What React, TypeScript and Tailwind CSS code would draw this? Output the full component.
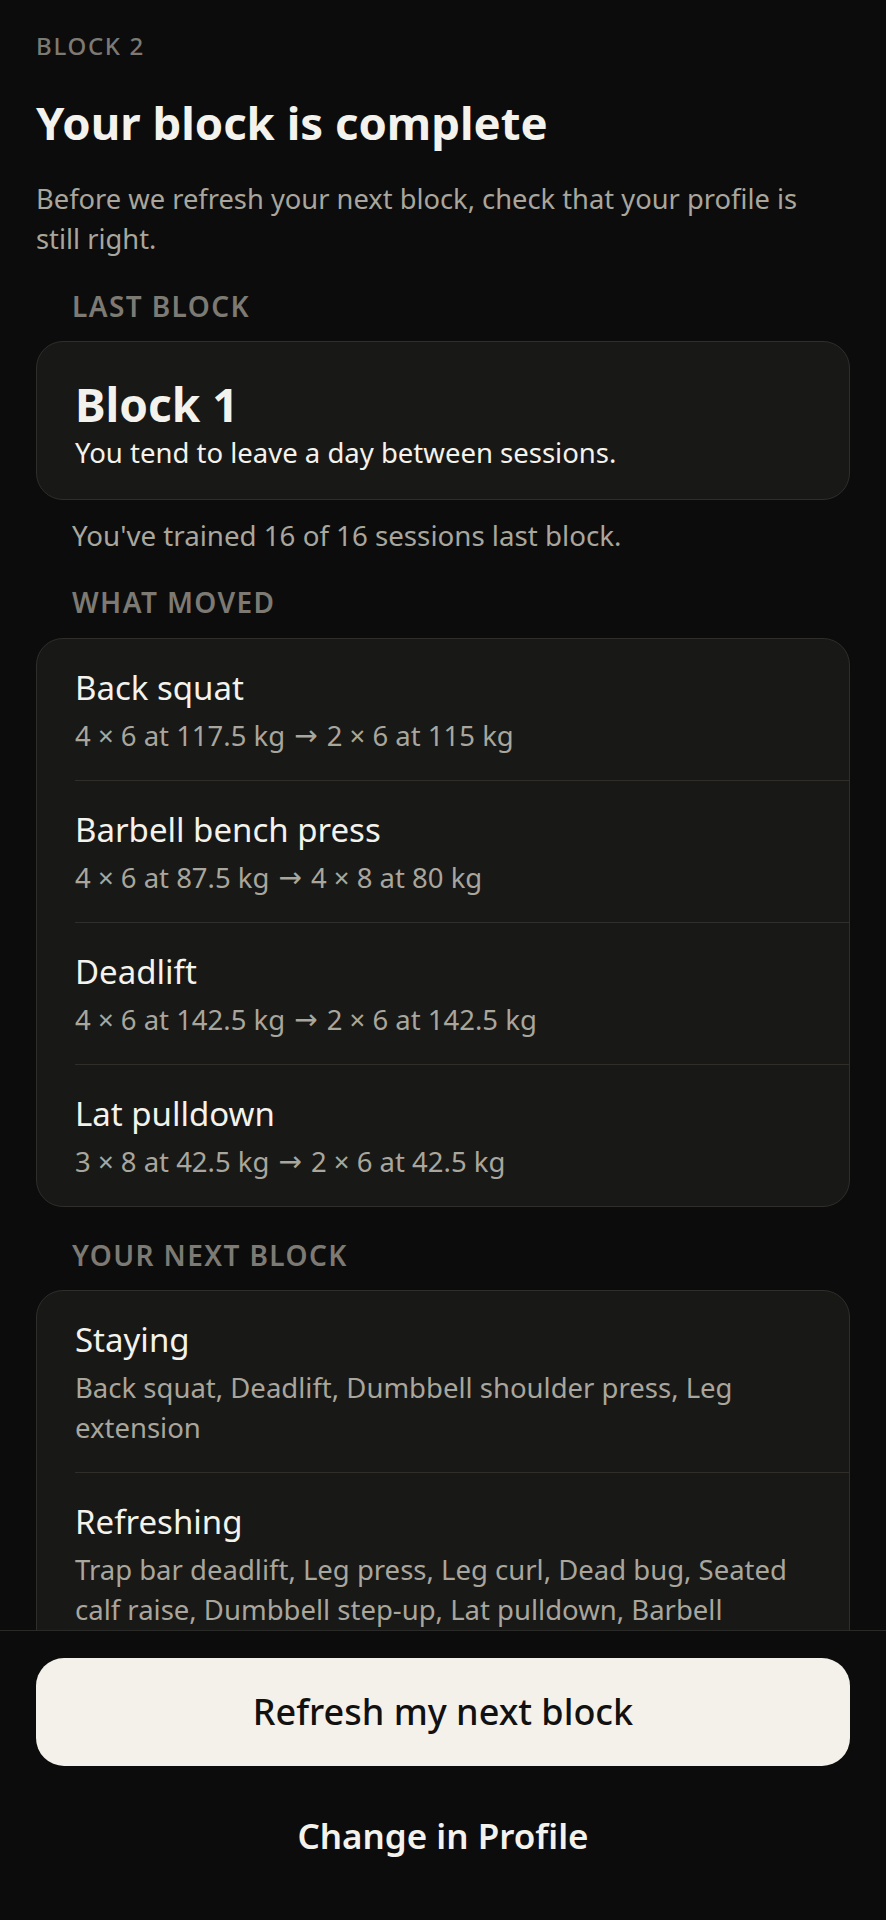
import React from "react";

const FONT = "font-['Noto_Sans',_'Open_Sans',_sans-serif]";

const MOVED = [
  { name: "Back squat", from: "4 × 6 at 117.5 kg", to: "2 × 6 at 115 kg" },
  { name: "Barbell bench press", from: "4 × 6 at 87.5 kg", to: "4 × 8 at 80 kg" },
  { name: "Deadlift", from: "4 × 6 at 142.5 kg", to: "2 × 6 at 142.5 kg" },
  { name: "Lat pulldown", from: "3 × 8 at 42.5 kg", to: "2 × 6 at 42.5 kg" },
];

const NEXT = [
  { name: "Staying", detail: "Back squat, Deadlift, Dumbbell shoulder press, Leg extension" },
  {
    name: "Refreshing",
    detail:
      "Trap bar deadlift, Leg press, Leg curl, Dead bug, Seated calf raise, Dumbbell step-up, Lat pulldown, Barbell overhead press",
  },
];

function SectionLabel({ children, className = "" }: { children: React.ReactNode; className?: string }) {
  return (
    <div className={`pl-[36px] text-[28px] leading-[36px] font-semibold uppercase tracking-[0.05em] text-[#7c7a73] ${className}`}>
      {children}
    </div>
  );
}

function Row({ name, children, last }: { name: string; children: React.ReactNode; last: boolean }) {
  return (
    <div className={`ml-[38px] pr-[38px] pt-[27px] pb-[24px] ${last ? "" : "border-b border-[#2f2e2b]"}`}>
      <div className="text-[33px] leading-[44px] text-[#f4f2ec]">{name}</div>
      <div className="mt-[6px] h-auto text-[27.5px] leading-[40px] text-[#a9a69d]">{children}</div>
    </div>
  );
}

export default function App() {
  return (
    <div className={`min-h-screen bg-[#0c0c0c] ${FONT}`}>
      <div className="px-[36px] pt-[30px] pb-[320px]">
        <div className="text-[24px] leading-[32px] font-medium tracking-[0.07em] text-[#7c7a73]">BLOCK 2</div>
        <h1 className="mt-[32px] text-[45.5px] leading-[56px] font-bold text-[#f4f2ec]">Your block is complete</h1>
        <p className="mt-[29px] pr-[24px] text-[27.3px] leading-[40px] text-[#a9a69d]">
          Before we refresh your next block, check that your profile is still right.
        </p>

        <SectionLabel className="mt-[29px]">Last block</SectionLabel>
        <div className="mt-[17px] rounded-[27px] border border-[#2f2e2b] bg-[#181816] px-[38px] pt-[33px] pb-[27px]">
          <div className="text-[46px] leading-[58px] font-bold text-[#f4f2ec]">Block 1</div>
          <div className="mt-[1px] text-[27.5px] leading-[38px] text-[#f4f2ec]">You tend to leave a day between sessions.</div>
        </div>
        <p className="mt-[17px] pl-[36px] text-[27.7px] leading-[36px] text-[#a9a69d]">
          You've trained 16 of 16 sessions last block.
        </p>

        <SectionLabel className="mt-[31px]">What moved</SectionLabel>
        <div className="mt-[18px] rounded-[27px] border border-[#2f2e2b] bg-[#181816] overflow-hidden">
          {MOVED.map((m, i) => (
            <Row key={m.name} name={m.name} last={i === MOVED.length - 1}>
              <div className="flex items-center gap-[9px] whitespace-nowrap">
                <span>{m.from}</span>
                <span className="font-['DejaVu_Sans',_sans-serif] text-[28px] leading-none">→</span>
                <span>{m.to}</span>
              </div>
            </Row>
          ))}
        </div>

        <SectionLabel className="mt-[30px]">Your next block</SectionLabel>
        <div className="mt-[17px] rounded-[27px] border border-[#2f2e2b] bg-[#181816] overflow-hidden">
          {NEXT.map((m, i) => (
            <Row key={m.name} name={m.name} last={i === NEXT.length - 1}>
              {m.detail}
            </Row>
          ))}
        </div>
      </div>

      {/* Sticky action bar over the scrolling list */}
      <div className="fixed bottom-0 left-0 right-0 border-t border-[#2a2a28] bg-[#0c0c0c] px-[36px] pt-[27px] pb-[30px] flex flex-col gap-[16px]">
        <button className="h-[108px] w-full rounded-[28px] bg-[#f3f1ea] text-[36px] font-medium text-[#111111]">
          Refresh my next block
        </button>
        <button className="h-[108px] w-full text-[35px] font-semibold text-[#f4f2ec]">Change in Profile</button>
      </div>
    </div>
  );
}
